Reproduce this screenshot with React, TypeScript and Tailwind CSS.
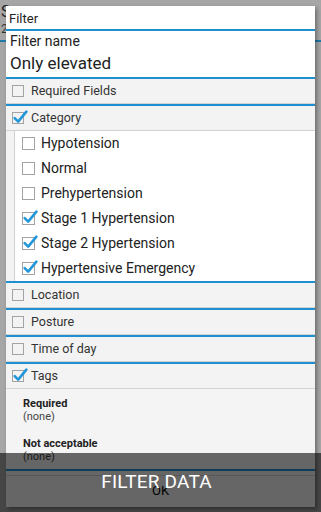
import React from 'react';

const font = { fontFamily: 'Roboto, "Noto Sans", sans-serif' };

function Box({ checked, big }: { checked?: boolean; big?: boolean }) {
    return (
        <span
            className={`relative inline-block shrink-0 border border-[#a3a3a3] ${big ? 'h-[13px] w-[13px] bg-white' : 'h-[12px] w-[12px]'}`}
        >
            {checked && (
                <svg className="absolute -left-[1px] -top-[4px] h-[16px] w-[16px]" viewBox="0 0 15 15">
                    <path d="M2.5 8.5 L5.8 11.8 L13.5 2.5" stroke="#2196d8" strokeWidth="2.4" fill="none" strokeLinecap="round" strokeLinejoin="round" />
                </svg>
            )}
        </span>
    );
}

function Header({ label, checked }: { label: string; checked?: boolean }) {
    return (
        <div className="shrink-0 border-t-2 border-[#1e90d2]">
            <div className="flex h-[25px] items-center gap-[7px] border-b border-[#d2d2d2] bg-[#f3f3f3] pl-[6px] text-[12.5px] text-[#333]">
                <Box checked={checked} />
                <span>{label}</span>
            </div>
        </div>
    );
}

const categories = [
    { label: 'Hypotension', checked: false },
    { label: 'Normal', checked: false },
    { label: 'Prehypertension', checked: false },
    { label: 'Stage 1 Hypertension', checked: true },
    { label: 'Stage 2 Hypertension', checked: true },
    { label: 'Hypertensive Emergency', checked: true },
];

export default function App() {
    return (
        <div className="relative h-[512px] w-[321px] overflow-hidden bg-[#a6a6a6]" style={font}>
            {/* screen behind the dialog */}
            <div className="pt-[3px]">
                <div className="pl-[1px] text-[16px] leading-[18px] text-[#222]">S</div>
                <div className="pl-[1px] text-[12px] leading-[16px] text-[#333]">2</div>
                <div className="mt-[3px] h-[2px] bg-[#1f7aa8]" />
            </div>

            {/* dialog */}
            <div className="absolute left-[6px] top-[6px] flex h-[501px] w-[309px] flex-col bg-white shadow-[2px_2px_4px_rgba(0,0,0,0.35)]">
                <div className="h-[25px] shrink-0 border-b-2 border-[#1e90d2] pl-[3px] pt-[4px] text-[13px] leading-[18px] text-[#222]">Filter</div>

                <div className="h-[46px] shrink-0 pl-[4px] pt-[1px] text-[#222]">
                    <div className="text-[14px] leading-[18px]">Filter name</div>
                    <div className="text-[17px] leading-[26px]">Only elevated</div>
                </div>

                <Header label="Required Fields" />
                <Header label="Category" checked />

                <div className="flex shrink-0">
                    <div className="w-[9px] border-r border-[#d0d0d0] bg-[#f3f3f3]" />
                    <div className="flex-1">
                        {categories.map((c) => (
                            <div key={c.label} className="flex h-[25px] items-center gap-[6px] pl-[7px] text-[14px] text-[#222]">
                                <Box checked={c.checked} big />
                                <span>{c.label}</span>
                            </div>
                        ))}
                    </div>
                </div>

                <Header label="Location" />
                <Header label="Posture" />
                <Header label="Time of day" />
                <Header label="Tags" checked />

                <div className="shrink-0 bg-[#f4f4f4] pb-[6px] pl-[17px] pt-[8px] text-[11px] leading-[13px] text-[#222]">
                    <div className="font-bold">Required</div>
                    <div className="text-[#444]">(none)</div>
                    <div className="mt-[14px] font-bold">Not acceptable</div>
                    <div className="text-[#444]">(none)</div>
                </div>

                <div className="h-[2px] shrink-0 bg-[#1e90d2]" />
                <div className="h-[4px] shrink-0 bg-[#f4f4f4]" />
                <div className="flex min-h-0 flex-1 items-center justify-center border-t border-[#cfcfcf] bg-[#f4f4f4] pb-[2px] text-[13px] text-black">OK</div>
            </div>

            {/* toast overlay */}
            <div className="absolute inset-x-0 bottom-0 top-[453px] flex items-center justify-center bg-black/[0.58] pr-[8px]">
                <span className="text-[19px] tracking-[0.2px] text-white">FILTER DATA</span>
            </div>
        </div>
    );
}
